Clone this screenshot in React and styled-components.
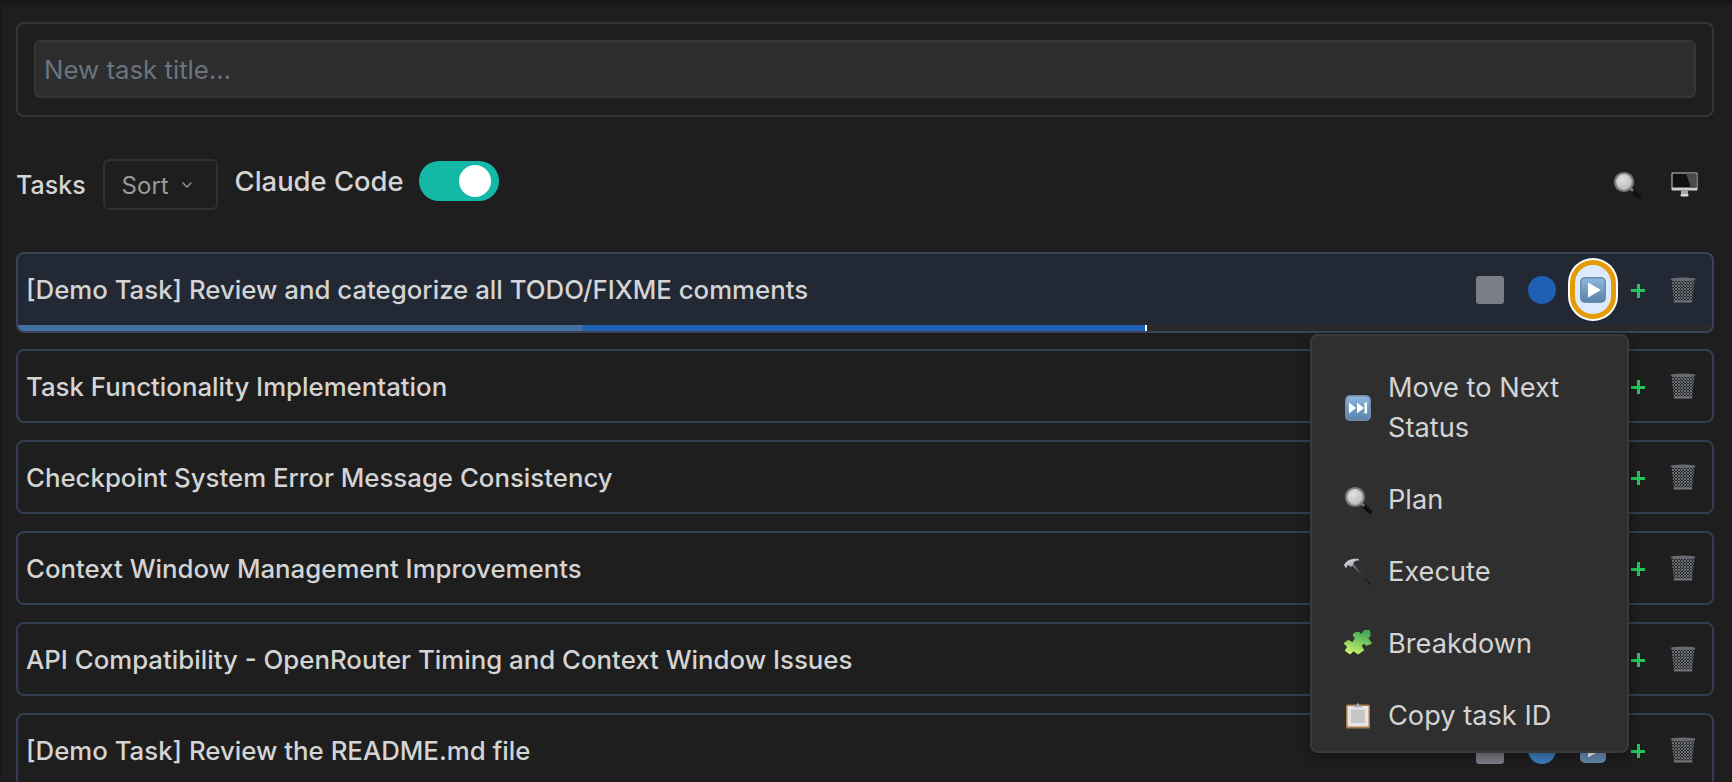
import React from "react";
import styled, { createGlobalStyle } from "styled-components";
import { ChevronDown } from "lucide-react";

const GlobalStyle = createGlobalStyle`
  html, body {
    margin: 0;
    height: 100%;
    overflow: hidden;
    background: #1e1e1e;
  }
  * { box-sizing: border-box; }
`;

const Page = styled.div`
  height: 782px;
  overflow: hidden;
  background: #1e1e1e;
  border-top: 5px solid #181818;
  border-left: 1px solid #181818;
  padding: 17px 18px 0 15px;
  font-family: Inter, "Noto Sans", sans-serif;
  color: #d4d4d4;
`;

const FormCard = styled.div`
  height: 95px;
  padding: 16px;
  border: 2px solid #363636;
  border-radius: 8px;
`;

const TitleInput = styled.input`
  display: block;
  width: 100%;
  height: 58px;
  padding: 0 8px;
  background: #2d2d2d;
  border: 2px solid #363636;
  border-radius: 6px;
  font: 400 25.8px Inter, sans-serif;
  color: #d4d4d4;
  &::placeholder { color: #6b7280; opacity: 1; }
`;

const Toolbar = styled.div`
  display: flex;
  align-items: center;
  height: 51px;
  margin: 42px 0 42px;
`;

const ToolbarLabel = styled.span`
  padding-top: 1px;
  font-size: 25px;
  font-weight: 500;
  margin-right: 17px;
`;

const SortSelect = styled.div`
  display: flex;
  align-items: center;
  gap: 10px;
  width: 115px;
  height: 51px;
  padding: 1px 16px 0 17px;
  border: 2px solid #303030;
  border-radius: 6px;
  font-size: 24px;
  color: #9a9a9a;
`;

const ToggleGroup = styled.div`
  display: flex;
  align-items: center;
  gap: 15px;
  margin: 0 0 8px 17px;
  font-size: 27.4px;
  font-weight: 500;
`;

const Toggle = styled.div`
  display: flex;
  align-items: center;
  justify-content: flex-end;
  width: 80px;
  height: 40px;
  padding-right: 8px;
  border-radius: 20px;
  background: #14b8a6;
`;

const Knob = styled.span`
  width: 32px;
  height: 32px;
  border-radius: 50%;
  background: #fff;
`;

const ToolbarIcons = styled.div`
  display: flex;
  align-items: center;
  gap: 30px;
  margin-left: auto;
  padding-right: 16px;
`;

const TaskList = styled.div`
  display: flex;
  flex-direction: column;
  gap: 17px;
`;

const Row = styled.div`
  position: relative;
  display: flex;
  flex-direction: column;
  flex: none;
  border: 2px solid ${(p) => (p.$active ? "#3a4358" : "#333e52")};
  border-radius: 8px;
  background: ${(p) => (p.$active ? "#222834" : "#1e1e1e")};
  ${(p) => p.$active && "z-index: 2; margin-bottom: -1px;"}
`;

const RowBody = styled.div`
  display: flex;
  align-items: center;
  height: ${(p) => (p.$active ? 71 : 70)}px;
  padding: 0 16px 0 8px;
`;

const RowTitle = styled.span`
  flex: 1;
  font-size: 25.8px;
  font-weight: 500;
  color: #d4d4d4;
`;

const Actions = styled.div`
  display: flex;
  align-items: center;
`;

const StopSquare = styled.span`
  width: 28px;
  height: 28px;
  border-radius: 3px;
  background: #7b7d86;
`;

const StatusDot = styled.span`
  width: 28px;
  height: 28px;
  margin-left: 24px;
  border-radius: 50%;
  background: ${(p) => (p.$light ? "#3f7fbf" : "#1f5fb4")};
`;

const PlayButton = styled.span`
  display: flex;
  align-items: center;
  justify-content: center;
  width: 46px;
  height: 59px;
  margin: 0 0 0 14px;
  border-radius: 23px;
  background: ${(p) => (p.$focused ? "#dbeafe" : "transparent")};
  ${(p) => p.$focused && "border: 5px solid #e59a07; box-shadow: 0 0 0 2px #fff;"}
`;

const PlusIcon = styled.span`
  position: relative;
  width: 14px;
  height: 14px;
  margin: 2px 0 0 15px;
  &::before, &::after {
    content: "";
    position: absolute;
    background: #22c55e;
  }
  &::before { left: 0; right: 0; top: 5.5px; height: 3px; }
  &::after { top: 0; bottom: 0; left: 5.5px; width: 3px; }
`;

const TrashWrap = styled.span`
  display: flex;
  margin-left: 25px;
`;

const ProgressTrack = styled.div`
  display: flex;
  height: 6px;
  background: #2a2a2a;
  border-radius: 0 0 6px 6px;
  overflow: hidden;
`;

const ProgressPart = styled.span`
  width: ${(p) => p.$width}px;
  background: ${(p) => p.$color};
`;

const Menu = styled.div`
  position: absolute;
  top: calc(100% + 3px);
  right: 83px;
  width: 319px;
  padding-top: 16px;
  background: #2f2f2f;
  border: 2px solid #3a3a3a;
  border-radius: 8px;
  box-shadow: 0 4px 12px rgba(0, 0, 0, 0.35);
`;

const MenuItem = styled.div`
  display: flex;
  align-items: center;
  gap: 16px;
  padding: 16px 32px;
  font-size: 27.2px;
  line-height: 40px;
  color: #d4d4d4;
  &:last-child { padding-bottom: 15px; }
`;

const MenuIcon = styled.span`
  display: flex;
  flex: none;
  width: 28px;
  height: 28px;
`;

function MagnifierIcon({ size = 28 }) {
  return (
    <svg width={size} height={size} viewBox="0 0 28 28">
      <defs>
        <radialGradient id="glass" cx="40%" cy="35%" r="70%">
          <stop offset="0%" stopColor="#e2e2e2" />
          <stop offset="100%" stopColor="#b4b4b4" />
        </radialGradient>
      </defs>
      <path d="M17 17l9 9" stroke="#111" strokeWidth="4.5" strokeLinecap="round" />
      <path d="M17.5 17.5l2.5 2.5" stroke="#777" strokeWidth="3" />
      <circle cx="11" cy="11" r="9" fill="url(#glass)" stroke="#767c80" strokeWidth="2.2" />
    </svg>
  );
}

function MonitorIcon() {
  return (
    <svg width="27" height="25" viewBox="0 0 27 25">
      <rect x="0.5" y="0.5" width="26" height="18" rx="1" fill="#d0d0d0" />
      <rect x="1.5" y="1.5" width="24" height="14" fill="#111" />
      <path d="M15 1.5h10.5v14H20z" fill="#4a4a4a" />
      <rect x="10" y="18.5" width="7" height="4" fill="#a9a9a9" />
      <rect x="9.5" y="22" width="8" height="2.5" rx="1" fill="#d8d8d8" />
    </svg>
  );
}

function KeycapIcon({ children, id }) {
  return (
    <svg width="28" height="28" viewBox="0 0 28 28">
      <defs>
        <linearGradient id={id} x1="0" y1="0" x2="0" y2="1">
          <stop offset="0%" stopColor="#8fb6dc" />
          <stop offset="100%" stopColor="#5a83ab" />
        </linearGradient>
      </defs>
      <rect x="1" y="1" width="26" height="26" rx="5" fill="#6c8bab" />
      <rect x="2.500" y="2.500" width="23" height="23" rx="4" fill={`url(#${id})`} />
      {children}
    </svg>
  );
}

function PlayIcon({ id }) {
  return (
    <KeycapIcon id={id}>
      <path d="M9 6.500L22 14 9 21.500z" fill="#fff" />
    </KeycapIcon>
  );
}

function NextIcon() {
  return (
    <KeycapIcon id="nextcap">
      <path d="M5 8.500l7 5.500-7 5.500zM13 8.500l7 5.500-7 5.500z" fill="#fff" />
      <rect x="20.500" y="8.500" width="2.500" height="11" fill="#fff" />
    </KeycapIcon>
  );
}

function HammerIcon() {
  return (
    <svg width="28" height="28" viewBox="0 0 28 28">
      <defs>
        <linearGradient id="hammerHead" x1="0" y1="0" x2="1" y2="1">
          <stop offset="0%" stopColor="#e8eaee" />
          <stop offset="100%" stopColor="#7f8794" />
        </linearGradient>
        <linearGradient id="hammerHandle" x1="0" y1="0" x2="1" y2="1">
          <stop offset="0%" stopColor="#9a9aa0" />
          <stop offset="45%" stopColor="#3a3a44" />
          <stop offset="100%" stopColor="#14141c" />
        </linearGradient>
      </defs>
      <path d="M8 6l18 20" stroke="url(#hammerHandle)" strokeWidth="1.800" strokeLinecap="round" />
      <path d="M0 7C2 3 7 0 15 1l0 1.500C11 2.500 9.500 4 9.500 6L7 9 4 7 2 10.500z" fill="url(#hammerHead)" />
    </svg>
  );
}

function PuzzleIcon() {
  return (
    <svg width="28" height="28" viewBox="0 0 28 28">
      <defs>
        <linearGradient id="puzzle" gradientUnits="userSpaceOnUse" x1="17" y1="1" x2="9" y2="26">
          <stop offset="0%" stopColor="#45a856" />
          <stop offset="100%" stopColor="#d2f86e" />
        </linearGradient>
      </defs>
      <path
        d="M11 3.300L15 2.700 16.700 6 20.500 1 25 1 25.700 5 23.300 8.300 26.700 13 22.700 14.700 19.300 12.300 16.700 15.700 19 20 14.300 23.300 9.300 20 6 23.300 2 20.500 4.300 16.700 1 13.300 4.300 11 8.700 13.300 12 8.300 9.700 5z"
        fill="url(#puzzle)"
        stroke="url(#puzzle)"
        strokeWidth="2"
        strokeLinejoin="round"
      />
    </svg>
  );
}

function ClipboardIcon() {
  return (
    <svg width="28" height="28" viewBox="0 0 28 28">
      <rect x="2" y="2.500" width="24" height="24" rx="1.500" fill="#a87b4a" />
      <rect x="3.500" y="4" width="21" height="20.500" fill="#e6e6e6" />
      <rect x="7" y="7.500" width="14" height="13.500" fill="#c6c6c6" />
      <path d="M10 3.500h2.500L14 0.500l1.500 3H18v2h-8z" fill="#aab0b8" />
    </svg>
  );
}

function TrashIcon({ id }) {
  return (
    <svg width="26" height="26" viewBox="0 0 26 26">
      <defs>
        <pattern id={id} width="3" height="3" patternUnits="userSpaceOnUse">
          <rect width="3" height="3" fill="#25272b" />
          <path d="M0 0l3 3M3 0L0 3" stroke="#72767c" strokeWidth="0.900" />
        </pattern>
      </defs>
      <path d="M1.500 2.500L4 25h18l2.500-22.500z" fill={`url(#${id})`} />
      <path d="M3.700 23.500h18.600L22 25.500H4z" fill="#6f7379" />
      <ellipse cx="13" cy="2.200" rx="12.500" ry="1.700" fill="#676a70" />
    </svg>
  );
}

const tasks = [
  "[Demo Task] Review and categorize all TODO/FIXME comments",
  "Task Functionality Implementation",
  "Checkpoint System Error Message Consistency",
  "Context Window Management Improvements",
  "API Compatibility - OpenRouter Timing and Context Window Issues",
  "[Demo Task] Review the README.md file",
];

const menuItems = [
  { label: "Move to Next Status", icon: <NextIcon /> },
  { label: "Plan", icon: <MagnifierIcon /> },
  { label: "Execute", icon: <HammerIcon /> },
  { label: "Breakdown", icon: <PuzzleIcon /> },
  { label: "Copy task ID", icon: <ClipboardIcon /> },
];

export default function App() {
  return (
    <>
      <GlobalStyle />
      <Page>
        <FormCard>
          <TitleInput placeholder="New task title..." />
        </FormCard>
        <Toolbar>
          <ToolbarLabel>Tasks</ToolbarLabel>
          <SortSelect>
            Sort
            <ChevronDown size={16} color="#9a9a9a" />
          </SortSelect>
          <ToggleGroup>
            Claude Code
            <Toggle>
              <Knob />
            </Toggle>
          </ToggleGroup>
          <ToolbarIcons>
            <MagnifierIcon />
            <MonitorIcon />
          </ToolbarIcons>
        </Toolbar>
        <TaskList>
          {tasks.map((title, i) => (
            <Row key={title} $active={i === 0}>
              <RowBody $active={i === 0}>
                <RowTitle>{title}</RowTitle>
                <Actions>
                  <StopSquare />
                  <StatusDot $light={i === 5} />
                  <PlayButton $focused={i === 0}>
                    <PlayIcon id={`play${i}`} />
                  </PlayButton>
                  <PlusIcon />
                  <TrashWrap>
                    <TrashIcon id={`mesh${i}`} />
                  </TrashWrap>
                </Actions>
              </RowBody>
              {i === 0 && (
                <>
                  <ProgressTrack>
                    <ProgressPart $width={565} $color="#41719f" />
                    <ProgressPart $width={562} $color="#1f5fb4" />
                    <ProgressPart $width={2} $color="#fff" />
                  </ProgressTrack>
                  <Menu>
                    {menuItems.map((item) => (
                      <MenuItem key={item.label}>
                        <MenuIcon>{item.icon}</MenuIcon>
                        {item.label}
                      </MenuItem>
                    ))}
                  </Menu>
                </>
              )}
            </Row>
          ))}
        </TaskList>
      </Page>
    </>
  );
}
